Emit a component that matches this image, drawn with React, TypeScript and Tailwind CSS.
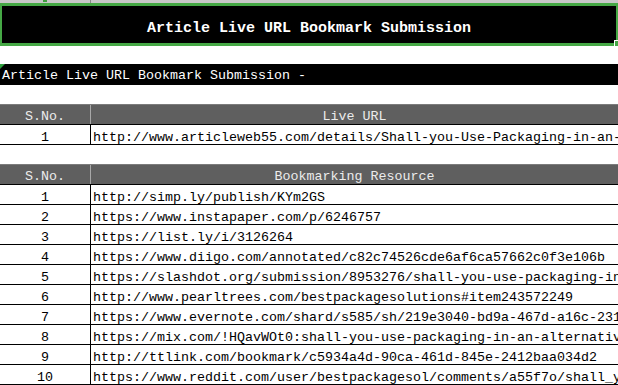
import React from "react";

const mono = { fontFamily: '"Liberation Mono", "DejaVu Sans Mono", monospace' };

const liveUrl =
  "http://www.articleweb55.com/details/Shall-you-Use-Packaging-in-an-Alternative-Way";

const resources = [
  "http://simp.ly/publish/KYm2GS",
  "https://www.instapaper.com/p/6246757",
  "https://list.ly/i/3126264",
  "https://www.diigo.com/annotated/c82c74526cde6af6ca57662c0f3e106b",
  "https://slashdot.org/submission/8953276/shall-you-use-packaging-in-an-alternative-way",
  "http://www.pearltrees.com/bestpackagesolutions#item243572249",
  "https://www.evernote.com/shard/s585/sh/219e3040-bd9a-467d-a16c-231f0c8d1e2a",
  "https://mix.com/!HQavWOt0:shall-you-use-packaging-in-an-alternative-way",
  "http://ttlink.com/bookmark/c5934a4d-90ca-461d-845e-2412baa034d2",
  "https://www.reddit.com/user/bestpackagesol/comments/a55f7o/shall_you_use_packaging",
];

function HeaderRow({ label }: { label: string }) {
  return (
    <div className="flex h-[20px] bg-[#5f5f5f] border-t border-[#7c7c7c] text-[#ececec] text-[13.33px] leading-[24px]">
      <div className="w-[91px] shrink-0 text-center border-r border-[#a8a8a8]">S.No.</div>
      <div className="flex-1 text-center whitespace-nowrap">{label}</div>
    </div>
  );
}

function DataRow({ n, url }: { n: number; url: string }) {
  return (
    <div className="flex h-[20px] border-b border-black text-black text-[13.33px] leading-[25px]">
      <div className="w-[91px] shrink-0 text-center border-r border-black">{n}</div>
      <div className="flex-1 min-w-0 pl-[2px] whitespace-nowrap overflow-hidden">{url}</div>
    </div>
  );
}

export default function App() {
  return (
    <div className="w-[618px] h-[385px] overflow-hidden bg-white" style={mono}>
      {/* top strip */}
      <div className="flex h-[3px] bg-[#c8c8c8]">
        <div className="w-[91px] shrink-0 border-r border-[#8a8a8a] flex justify-center">
          <div className="w-[4px] h-[2px] bg-[#3f9f3f]" />
        </div>
        <div className="flex-1" />
      </div>

      {/* title box */}
      <div className="relative h-[43px] bg-black border-t-[3px] border-b-[3px] border-l-2 border-r-2 border-[#45a845] flex items-center justify-center">
        <span className="text-white font-bold text-[15px] leading-none pt-[7px] whitespace-nowrap">
          Article Live URL Bookmark Submission
        </span>
        <div className="absolute right-[-2px] bottom-[-3px] w-[4px] h-[6px] bg-[#45a845] border-l border-t border-white" />
      </div>

      <div className="h-[18px]" />

      {/* subtitle bar */}
      <div className="relative h-[21px] bg-black text-white text-[13.33px] leading-[23px] pl-[2px] whitespace-nowrap">
        Article Live URL Bookmark Submission -
        <svg className="absolute left-0 top-0" width="5" height="5" viewBox="0 0 5 5">
          <polygon points="0,0 5,0 0,5" fill="#2e9e3e" />
        </svg>
      </div>

      <div className="h-[19px]" />

      <HeaderRow label="Live URL" />
      <div className="border-t border-black">
        <DataRow n={1} url={liveUrl} />
      </div>

      <div className="h-[19px]" />

      <HeaderRow label="Bookmarking Resource" />
      <div className="border-t border-black">
        {resources.map((u, i) => (
          <DataRow key={i} n={i + 1} url={u} />
        ))}
      </div>
    </div>
  );
}
